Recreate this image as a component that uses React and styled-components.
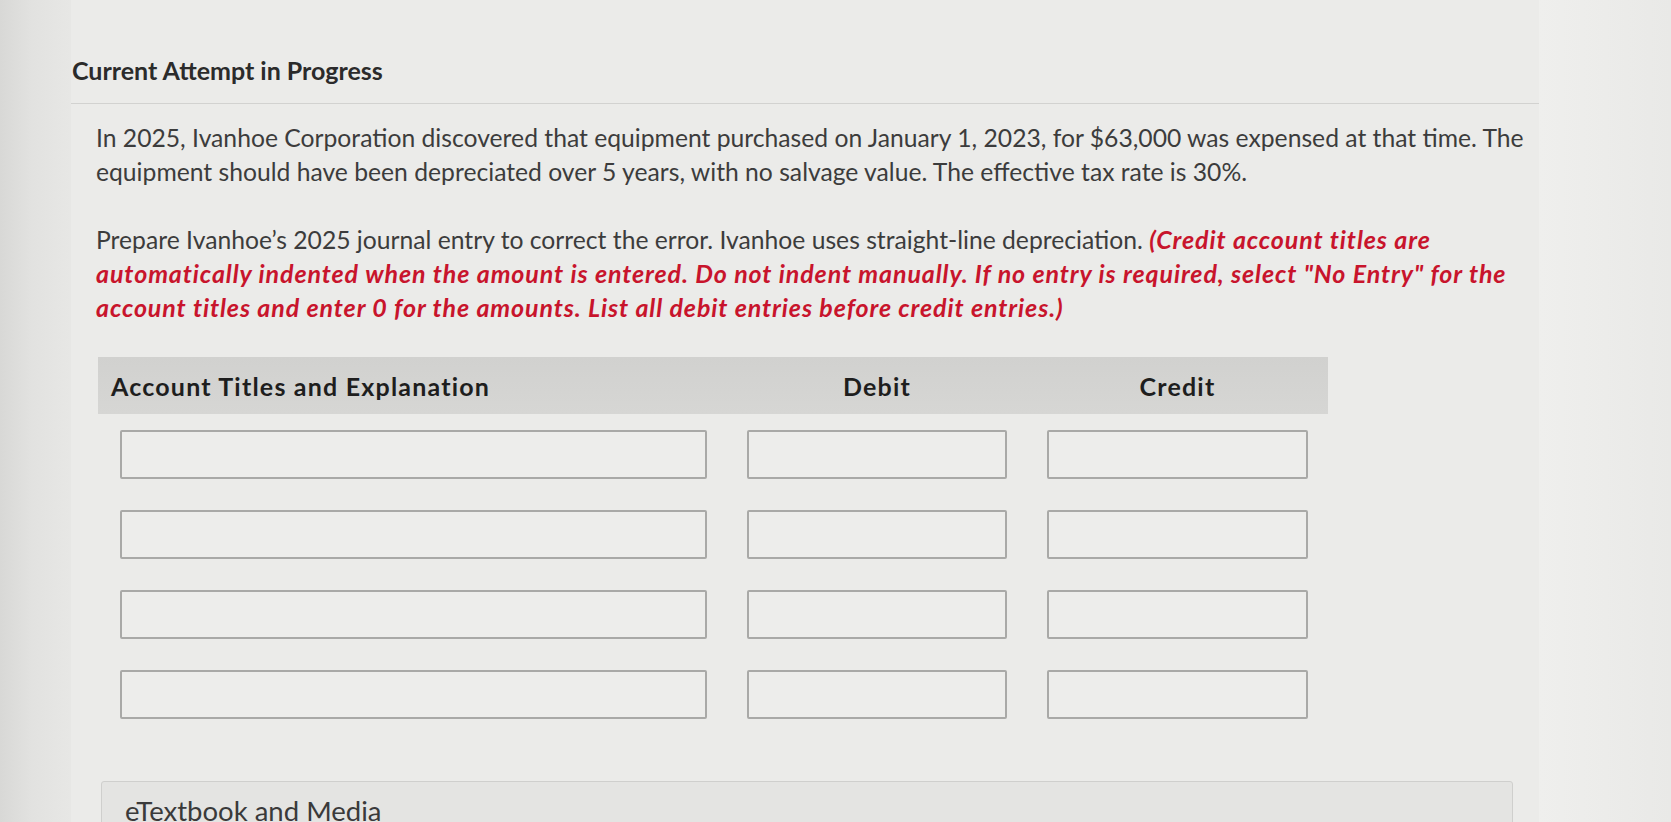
import React from "react";
import styled, { createGlobalStyle } from "styled-components";

const GlobalStyle = createGlobalStyle`
  html, body {
    margin: 0;
    padding: 0;
    background: #e9e9e7;
  }
  body {
    font-family: Lato, "Liberation Sans", sans-serif;
    color: #3a3a3a;
  }
`;

const rows = [1, 2, 3, 4];

const App = () => {
  return (
    <>
      <GlobalStyle />
      <Screen>
        <LeftGutter />
        <Content>
          <TitleBar>
            <Title>Current Attempt in Progress</Title>
          </TitleBar>
          <Body>
            <Paragraph>
              In 2025, Ivanhoe Corporation discovered that equipment purchased on January 1, 2023, for $63,000 was
              expensed at that time. The equipment should have been depreciated over 5 years, with no salvage value.
              The effective tax rate is 30%.
            </Paragraph>
            <Paragraph>
              Prepare Ivanhoe’s 2025 journal entry to correct the error. Ivanhoe uses straight-line depreciation.{" "}
              <Note>
                (Credit account titles are automatically indented when the amount is entered. Do not indent manually.
                If no entry is required, select "No Entry" for the account titles and enter 0 for the amounts. List all
                debit entries before credit entries.)
              </Note>
            </Paragraph>

            <Table>
              <HeaderRow>
                <HeaderCell>Account Titles and Explanation</HeaderCell>
                <HeaderCell center>Debit</HeaderCell>
                <HeaderCell center>Credit</HeaderCell>
              </HeaderRow>
              {rows.map((row) => (
                <EntryRow key={row}>
                  <Cell wide>
                    <Field />
                  </Cell>
                  <Cell>
                    <Field />
                  </Cell>
                  <Cell>
                    <Field />
                  </Cell>
                </EntryRow>
              ))}
            </Table>

            <MediaBox>
              <MediaTitle>eTextbook and Media</MediaTitle>
            </MediaBox>
          </Body>
        </Content>
        <RightGutter />
      </Screen>
    </>
  );
};

const Screen = styled.div`
  display: flex;
  height: 822px;
  overflow: hidden;
`;

const LeftGutter = styled.div`
  flex: none;
  width: 71px;
  background: linear-gradient(to right, #d8d8d6 0%, #e2e2e0 45%, #e7e7e5 100%);
`;

const Content = styled.main`
  flex: none;
  width: 1468px;
  background: #ebebe9;
`;

const RightGutter = styled.div`
  flex: 1;
  background: linear-gradient(to right, #efefed, #e9e9e7);
`;

const TitleBar = styled.div`
  padding: 55px 0 18px 1px;
  border-bottom: 1px solid #d2d2d0;
`;

const Title = styled.h1`
  margin: 0;
  font-size: 25px;
  line-height: 30px;
  font-weight: 700;
  color: #2b2b2b;
`;

const Body = styled.div`
  padding: 17px 0 0 25px;
  width: 1435px;
`;

const Paragraph = styled.p`
  margin: 0 0 34px 0;
  font-size: 24.7px;
  line-height: 34px;
  color: #3c3c3c;
`;

const Note = styled.span`
  font-size: 25px;
  line-height: 32px;
  font-weight: 700;
  font-style: italic;
  letter-spacing: 0.9px;
  color: #c8142c;
`;

const Table = styled.div`
  margin: -2px 0 0 2px;
  width: 1230px;
`;

const HeaderRow = styled.div`
  display: grid;
  grid-template-columns: 629px 300px 301px;
  height: 57px;
  align-items: center;
  background: linear-gradient(to bottom, #d1d1cf, #d6d6d4);
`;

const HeaderCell = styled.div`
  padding-left: ${(p) => (p.center ? "0" : "13px")};
  text-align: ${(p) => (p.center ? "center" : "left")};
  font-size: 25px;
  letter-spacing: 1.2px;
  font-weight: 700;
  color: #1e1e1e;
`;

const EntryRow = styled.div`
  display: grid;
  grid-template-columns: 629px 300px 301px;
`;

const Cell = styled.div`
  padding: 16px 20px 15px ${(p) => (p.wide ? "22px" : "20px")};
`;

const Field = styled.div`
  height: 45px;
  border: 2px solid #a9a9a7;
  border-radius: 2px;
  background: #ededeb;
`;

const MediaBox = styled.div`
  margin: 47px 0 0 5px;
  width: 1410px;
  height: 80px;
  border: 1px solid #cfcfcd;
  border-radius: 3px;
  background: #e4e4e2;
`;

const MediaTitle = styled.div`
  padding: 13px 0 0 23px;
  font-size: 27.5px;
  line-height: 32px;
  color: #3a3a3a;
`;

export default App;
